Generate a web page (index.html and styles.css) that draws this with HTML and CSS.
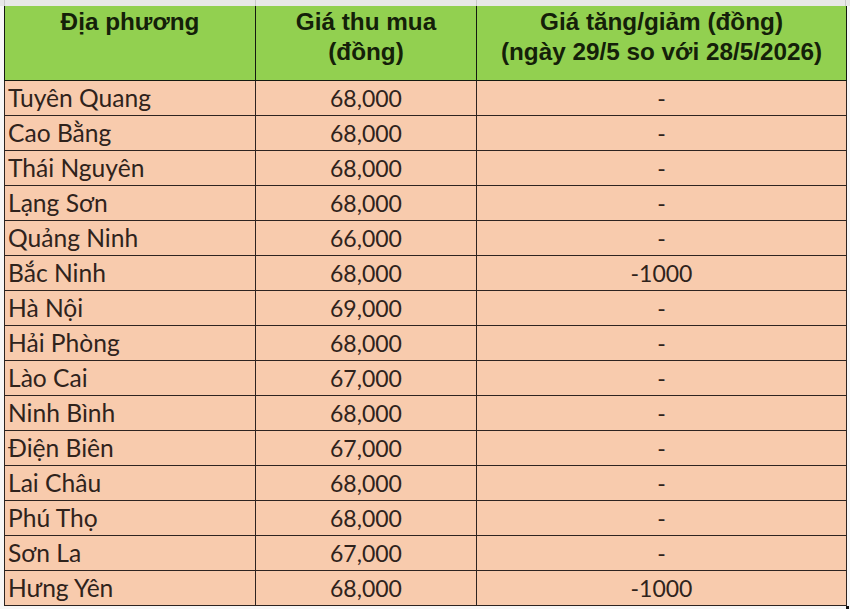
FILE: index.html
```html
<!DOCTYPE html>
<html lang="vi">
<head>
<meta charset="utf-8">
<title>Giá heo hơi</title>
<link rel="stylesheet" href="styles.css">
</head>
<body>
<div class="sheet">
  <div class="prev-row">
    <div class="pcell c1"></div>
    <div class="pcell c2"></div>
    <div class="pcell c3"></div>
    <div class="pcell c4"></div>
  </div>
  <div class="main">
    <table class="prices">
      <colgroup>
        <col class="w1"><col class="w2"><col class="w3">
      </colgroup>
      <thead>
        <tr class="head">
          <th>Địa phương</th>
          <th>Giá thu mua<br>(đồng)</th>
          <th>Giá tăng/giảm (đồng)<br>(ngày 29/5 so với 28/5/2026)</th>
        </tr>
      </thead>
      <tbody>
        <tr><td class="name">Tuyên Quang</td><td>68,000</td><td>-</td></tr>
        <tr><td class="name">Cao Bằng</td><td>68,000</td><td>-</td></tr>
        <tr><td class="name">Thái Nguyên</td><td>68,000</td><td>-</td></tr>
        <tr><td class="name">Lạng Sơn</td><td>68,000</td><td>-</td></tr>
        <tr><td class="name">Quảng Ninh</td><td>66,000</td><td>-</td></tr>
        <tr><td class="name">Bắc Ninh</td><td>68,000</td><td>-1000</td></tr>
        <tr><td class="name">Hà Nội</td><td>69,000</td><td>-</td></tr>
        <tr><td class="name">Hải Phòng</td><td>68,000</td><td>-</td></tr>
        <tr><td class="name">Lào Cai</td><td>67,000</td><td>-</td></tr>
        <tr><td class="name">Ninh Bình</td><td>68,000</td><td>-</td></tr>
        <tr><td class="name">Điện Biên</td><td>67,000</td><td>-</td></tr>
        <tr><td class="name">Lai Châu</td><td>68,000</td><td>-</td></tr>
        <tr><td class="name">Phú Thọ</td><td>68,000</td><td>-</td></tr>
        <tr><td class="name">Sơn La</td><td>67,000</td><td>-</td></tr>
        <tr><td class="name">Hưng Yên</td><td>68,000</td><td>-1000</td></tr>
      </tbody>
    </table>
    <div class="handle"></div>
  </div>
</div>
</body>
</html>
```
FILE: styles.css
```css
html, body {
  margin: 0;
  padding: 0;
}
body {
  width: 850px;
  height: 609px;
  overflow: hidden;
  background: #f7f7f7;
  font-family: Lato, "Noto Sans", sans-serif;
}
.sheet {
  display: flex;
  flex-direction: column;
}
.prev-row {
  height: 6px;
  display: flex;
  background: #e8e8e8;
}
.pcell {
  border-right: 1px solid #c9c9c9;
  box-sizing: border-box;
}
.pcell.c1 { width: 5px; }
.pcell.c2 { width: 251px; }
.pcell.c3 { width: 221px; }
.pcell.c4 { width: 369px; }
.main {
  position: relative;
  padding-left: 4px;
}
.prices {
  border-collapse: collapse;
  table-layout: fixed;
  width: 842px;
}
.w1 { width: 251px; }
.w2 { width: 221px; }
.w3 { width: 370px; }
.prices th,
.prices td {
  border: 1px solid #2e2420;
  padding: 0;
}
.head th {
  background: #92d050;
  color: #142009;
  font-family: "Liberation Sans", Arial, sans-serif;
  font-weight: bold;
  font-size: 24.3px;
  line-height: 30px;
  height: 73px;
  vertical-align: top;
  padding-top: 1px;
  text-align: center;
  border-top: 0;
  border-color: #141a10;
}
.prices td {
  background: #f8cbad;
  color: #2f231c;
  font-size: 23px;
  line-height: 34px;
  height: 34px;
  text-align: center;
  vertical-align: bottom;
  white-space: nowrap;
}
.prices td.name {
  text-align: left;
  padding-left: 3px;
  font-size: 24.6px;
}
.handle {
  position: absolute;
  right: 1px;
  bottom: -6px;
  width: 3px;
  height: 6px;
  background: #111;
}
```
